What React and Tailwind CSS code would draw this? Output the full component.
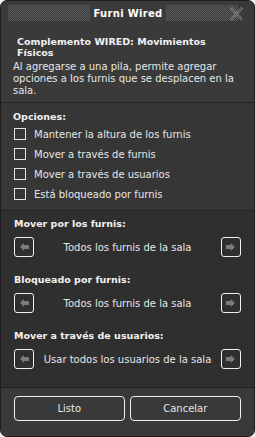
const font = "font-['DejaVu_Sans',sans-serif]";

const Checkbox = ({ label }) => (
  <div className="flex items-center h-[20px]">
    <div className="w-[12px] h-[12px] border border-[#e6e6e6] ml-[13px] mr-[8px]" />
    <span className="text-[10px] text-[#e6e6e6]">{label}</span>
  </div>
);

const ArrowBtn = ({ dir }) => (
  <div className="w-[20px] h-[20px] border border-[#f0f0f0] rounded-[3px] flex items-center justify-center shrink-0">
    <svg width="10" height="8" viewBox="0 0 10 8" className={dir === "right" ? "" : "rotate-180"}>
      <path d="M0 2h5V0l4 4-4 4V6H0z" fill="#7c7c7c" />
    </svg>
  </div>
);

const Selector = ({ title, value }) => (
  <div className="px-[13px]">
    <div className="text-[9.5px] font-bold text-[#f2f2f2] h-[14px] leading-[14px]">{title}</div>
    <div className="flex items-center mt-[6px]">
      <ArrowBtn dir="left" />
      <span className="flex-1 text-center text-[10px] text-[#e6e6e6]">{value}</span>
      <ArrowBtn dir="right" />
    </div>
  </div>
);

export default function App() {
  return (
    <div className={`w-[255px] h-[437px] bg-[#f7f4e6] ${font}`}>
      <div className="w-[255px] h-[437px] rounded-[7px] border border-[#1e1e1e] bg-[#3a3a3a] overflow-hidden flex flex-col">
        {/* title bar */}
        <div className="h-[24px] flex items-center relative">
          <div className="ml-[7px] w-[82px] h-[16px] bg-[repeating-conic-gradient(#5c5c5c_0_25%,#3a3a3a_0_50%)] bg-[length:2px_2px]" />
          <div className="flex-1 text-center text-[10px] font-bold text-white tracking-[0.3px]">Furni Wired</div>
          <div className="mr-[16px] w-[72px] h-[16px] bg-[repeating-conic-gradient(#5c5c5c_0_25%,#3a3a3a_0_50%)] bg-[length:2px_2px]" />
          <svg className="absolute right-[9px] top-[5px]" width="17" height="16" viewBox="0 0 17 16">
            <path d="M3 2l11 12M14 2L3 14" stroke="#8a8a8a" strokeWidth="3" strokeDasharray="1 1" />
          </svg>
        </div>

        {/* info */}
        <div className="h-[77px] px-[12px] pt-[11px]">
          <div className="text-[9.5px] font-bold text-[#f2f2f2] leading-[11px] pl-[4px] pr-[20px]">
            Complemento WIRED: Movimientos Físicos
          </div>
          <div className="text-[10px] text-[#e6e6e6] leading-[12px] mt-[3px]">
            Al agregarse a una pila, permite agregar opciones a los furnis que se desplacen en la sala.
          </div>
        </div>

        {/* options */}
        <div className="h-[108px] bg-[#363636] border-t border-[#252525] pt-[6px]">
          <div className="px-[12px] text-[9.5px] font-bold text-[#f2f2f2] h-[15px] leading-[15px]">Opciones:</div>
          <div>
            <Checkbox label="Mantener la altura de los furnis" />
            <Checkbox label="Mover a través de furnis" />
            <Checkbox label="Mover a través de usuarios" />
            <Checkbox label="Está bloqueado por furnis" />
          </div>
        </div>

        {/* selectors */}
        <div className="h-[177px] bg-[#2f2f2f] border-t border-[#222] pt-[6px] flex flex-col gap-[16px]">
          <Selector title="Mover por los furnis:" value="Todos los furnis de la sala" />
          <Selector title="Bloqueado por furnis:" value="Todos los furnis de la sala" />
          <Selector title="Mover a través de usuarios:" value="Usar todos los usuarios de la sala" />
        </div>

        {/* footer */}
        <div className="flex-1 bg-[#393939] border-t border-[#1f1f1f] px-[13px] pt-[8px] flex gap-[5px]">
          <div className="w-[111px] h-[25px] border border-[#f0f0f0] rounded-[4px] flex items-center justify-center text-[10px] text-[#e6e6e6]">Listo</div>
          <div className="w-[112px] h-[25px] border border-[#f0f0f0] rounded-[4px] flex items-center justify-center text-[10px] text-[#e6e6e6]">Cancelar</div>
        </div>
      </div>
    </div>
  );
}
